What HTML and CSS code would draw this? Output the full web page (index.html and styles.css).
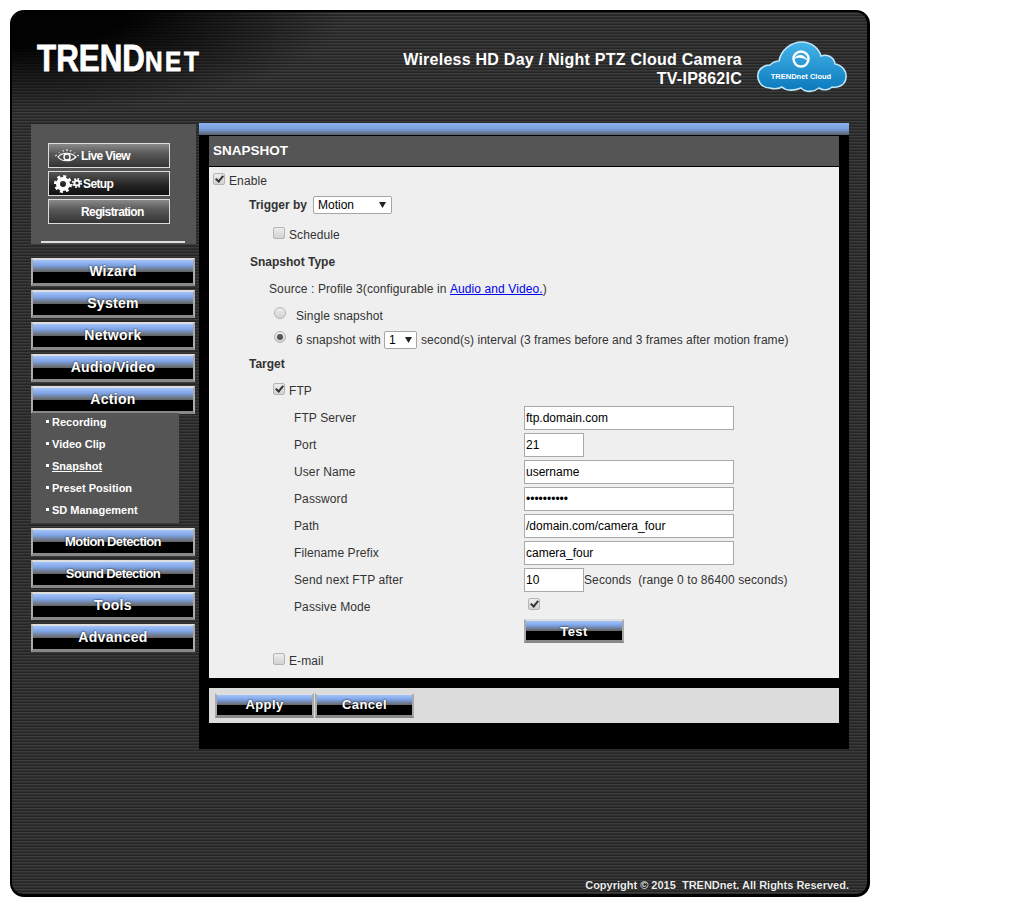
FILE: index.html
```html
<!DOCTYPE html>
<html lang="en">
<head>
  <meta charset="UTF-8">
  <title>TRENDnet TV-IP862IC</title>
  <link rel="stylesheet" href="styles.css">
</head>
<body>

  <div class="frame">

    <div class="header">
      <div class="logo">TREND<span class="logo-small">NET</span></div>
      <div class="model">
        <div>Wireless HD Day / Night PTZ Cloud Camera</div>
        <div>TV-IP862IC</div>
      </div>
      <svg class="cloud" viewBox="0 0 92 52" width="92" height="52">
        <defs>
          <linearGradient id="cloudFill" x1="0" y1="0" x2="0" y2="1">
            <stop offset="0" stop-color="#45b4e8"/>
            <stop offset="1" stop-color="#0a79bd"/>
          </linearGradient>
        </defs>
        <path d="M14 47 C4 47 1 38 2 33 C3 27 9 24 14 24 C17 21 21 20 23 20 C25 9 35 1 46 1 C56 1 63 8 65 15 C70 13 78 15 79 23 C86 24 91 30 90 37 C89 44 83 47 76 46 C73 49 67 50 63 47 C58 51 50 52 45 47 C38 50 30 50 26 46 C22 48 17 48 14 47 Z" fill="url(#cloudFill)" stroke="#bfe6f8" stroke-width="1.6"/>
        <circle cx="45" cy="18" r="7.5" fill="none" stroke="#fff" stroke-width="2.4"/>
        <path d="M38 18 C41 13 48 12 52 20 C47 16 42 16 38 18 Z" fill="#fff"/>
        <text class="cloud-text" x="45" y="38" text-anchor="middle">TRENDnet Cloud</text>
      </svg>
    </div>

    <div class="main">

      <div class="sidebar">
        <div class="quick">
          <a class="quick-btn" href="#">
            <svg class="eye" viewBox="0 0 26 15" width="26" height="15">
              <path d="M4 9 C8 4 17 4 22 9 C17 14 8 14 4 9 Z" fill="none" stroke="#fff" stroke-width="1.2"/>
              <circle cx="13" cy="9" r="3" fill="none" stroke="#fff" stroke-width="1.4"/>
              <path d="M1 8 L3 7 M5 4.500 L6 5.500 M9 2 L9.500 3.500 M13 1 L13 3 M17 2 L16.500 3.500 M21 4.500 L20 5.500 M25 8 L23 7" stroke="#fff" stroke-width="1"/>
            </svg>
            <span class="tight">Live View</span>
          </a>
          <a class="quick-btn quick-dark" href="#">
            <svg viewBox="0 0 28 18" width="28" height="18">
              <circle cx="9" cy="9" r="5" fill="none" stroke="#fff" stroke-width="4"/>
              <circle cx="9" cy="9" r="7.400" fill="none" stroke="#fff" stroke-width="3.200" stroke-dasharray="2.900 2.900"/>
              <circle cx="23" cy="8" r="2.600" fill="none" stroke="#fff" stroke-width="2"/>
              <circle cx="23" cy="8" r="4.200" fill="none" stroke="#fff" stroke-width="1.800" stroke-dasharray="1.650 1.650"/>
            </svg>
            <span class="tight">Setup</span>
          </a>
          <a class="quick-btn quick-text" href="#"><span class="tight">Registration</span></a>
          <div class="quick-line"></div>
        </div>

        <a class="nav-btn" href="#">Wizard</a>
        <a class="nav-btn" href="#">System</a>
        <a class="nav-btn" href="#">Network</a>
        <a class="nav-btn" href="#">Audio/Video</a>
        <a class="nav-btn" href="#">Action</a>
        <div class="submenu">
          <a href="#">Recording</a>
          <a href="#">Video Clip</a>
          <a href="#" class="current">Snapshot</a>
          <a href="#">Preset Position</a>
          <a href="#">SD Management</a>
        </div>
        <a class="nav-btn nav-tight" href="#">Motion Detection</a>
        <a class="nav-btn nav-tight" href="#">Sound Detection</a>
        <a class="nav-btn" href="#">Tools</a>
        <a class="nav-btn" href="#">Advanced</a>
      </div>

      <div class="content">
        <div class="blue-bar"></div>
        <div class="panel">
          <h1 class="title">SNAPSHOT</h1>

          <div class="form">
            <div class="row"><input type="checkbox" checked>Enable</div>

            <div class="row indent1">
              <strong class="trigger-label">Trigger by</strong>
              <select class="select-motion"><option>Motion</option></select>
            </div>
            <div class="row indent2 gap6"><input type="checkbox">Schedule</div>

            <div class="row indent1 gap3"><strong class="type-label">Snapshot Type</strong></div>
            <div class="row indent3 gap3">Source : Profile 3(configurable in&nbsp;<a href="#">Audio and Video.</a>)</div>
            <div class="row indent2 gap3"><input type="radio" class="radio">Single snapshot</div>
            <div class="row indent2">
              <input type="radio" class="radio" checked>
              <span>6 snapshot with</span>
              <select class="select-small"><option>1</option></select>
              <span class="interval">second(s) interval (3 frames before and 3 frames after motion frame)</span>
            </div>

            <div class="row indent1"><strong>Target</strong></div>
            <div class="row indent2 gap3"><input type="checkbox" checked>FTP</div>

            <div class="ftp">
              <label>FTP Server</label><div><input type="text" value="ftp.domain.com"></div>
              <label>Port</label><div><input type="text" class="short" value="21"></div>
              <label>User Name</label><div><input type="text" value="username"></div>
              <label>Password</label><div><input type="password" value="1234567890"></div>
              <label>Path</label><div><input type="text" value="/domain.com/camera_four"></div>
              <label>Filename Prefix</label><div><input type="text" value="camera_four"></div>
              <label>Send next FTP after</label><div class="cell-flex"><input type="text" class="short" value="10">Seconds&nbsp; (range 0 to 86400 seconds)</div>
              <label>Passive Mode</label><div class="cell-check"><input type="checkbox" checked></div>
              <span></span><div class="cell-btn"><a class="btn btn-test" href="#">Test</a></div>
            </div>

            <div class="row indent2 gap2"><input type="checkbox">E-mail</div>
          </div>

          <div class="actions">
            <a class="btn" href="#">Apply</a>
            <a class="btn" href="#">Cancel</a>
          </div>
        </div>
      </div>

    </div>

    <div class="copyright">Copyright © 2015&nbsp; TRENDnet. All Rights Reserved.</div>
  </div>

</body>
</html>
```

FILE: styles.css
```css
body {
  margin: 0;
  background: #fff;
  font-family: "Liberation Sans", Arial, sans-serif;
  font-size: 12px;
  color: #333;
}
a {
  text-decoration: none;
}

.frame {
  box-sizing: border-box;
  width: 860px;
  height: 887px;
  margin: 10px 0 0 10px;
  border: 2px solid #000;
  border-right-width: 3px;
  border-bottom-width: 3px;
  border-radius: 14px;
  padding-left: 18px;
  display: flex;
  flex-direction: column;
  background: repeating-linear-gradient(180deg, #252525 0, #252525 1px, #3c3c3c 1px, #3c3c3c 2px, #2e2e2e 2px, #2e2e2e 3px);
}

/* header */
.header {
  height: 110px;
  margin-left: -18px;
  padding: 0 19px 0 25px;
  display: flex;
  align-items: flex-start;
  border-radius: 12px 12px 0 0;
  background: radial-gradient(ellipse 330px 100px at 0 0, rgba(0,0,0,0.95) 35%, rgba(0,0,0,0) 100%);
}
.logo {
  margin-top: 27px;
  font-weight: bold;
  font-size: 36px;
  line-height: 40px;
  color: #fff;
  white-space: nowrap;
  transform: scaleX(0.87);
  transform-origin: left center;
  -webkit-text-stroke: 0.8px #fff;
  text-shadow: 1px 1px 1px #000;
}
.logo-small {
  font-size: 28px;
  letter-spacing: 3px;
}
.model {
  margin: 38px 14px 0 auto;
  font-weight: bold;
  font-size: 16px;
  line-height: 19px;
  letter-spacing: 0.25px;
  color: #fff;
  text-align: right;
}
.cloud {
  margin-top: 29px;
  flex: none;
}
.cloud-text {
  font-size: 7.5px;
  font-weight: bold;
  fill: #fff;
}

.main {
  display: flex;
  gap: 3px;
  flex: 1;
}

/* left column */
.sidebar {
  width: 166px;
  display: flex;
  flex-direction: column;
}
.quick {
  box-sizing: border-box;
  width: 165px;
  height: 120px;
  margin: 2px 0 14px 1px;
  padding: 19px 0 0 17px;
  background: #555;
  display: flex;
  flex-direction: column;
  align-items: flex-start;
  gap: 3px;
}
.quick-btn {
  box-sizing: border-box;
  width: 122px;
  height: 25px;
  padding-left: 5px;
  border: 1px solid #ddd;
  display: flex;
  align-items: center;
  color: #fff;
  font-weight: bold;
  font-size: 12px;
  background: linear-gradient(180deg, #8a8a8a 0, #5a5a5a 40%, #333 100%);
}
.quick-dark {
  background: linear-gradient(180deg, #555 0, #222 60%, #111 100%);
}
.quick-text {
  padding-left: 31px;
}
.tight {
  letter-spacing: -0.6px;
}
.quick-btn .tight {
  margin-left: 1px;
}
.quick-line {
  width: 144px;
  height: 2px;
  margin: 14px 0 0 -7px;
  background: #ddd;
}

.nav-btn, .btn {
  box-sizing: border-box;
  display: block;
  text-align: center;
  color: #fff;
  font-weight: bold;
  border: 2px solid #aaa;
  border-top-color: #ddd;
  border-bottom: 3px solid #888;
  background: linear-gradient(180deg, #a4c4fa 0, #7fa5e8 22%, #666 50%, #000 52%, #000 100%);
  text-shadow: 0 0 2px #000;
}
.nav-btn {
  width: 164px;
  height: 28px;
  margin: 0 0 4px 1px;
  font-size: 14px;
  line-height: 22px;
  letter-spacing: 0.3px;
}
.nav-btn.nav-tight {
  font-size: 13px;
  line-height: 23px;
  letter-spacing: -0.6px;
}
.submenu {
  box-sizing: border-box;
  width: 148px;
  height: 110px;
  margin: -5px 0 5px 1px;
  background: #555;
  display: flex;
  flex-direction: column;
}
.submenu a {
  height: 22px;
  line-height: 18px;
  padding-left: 21px;
  color: #fff;
  font-weight: bold;
  font-size: 11px;
  position: relative;
}
.submenu a::before {
  content: "";
  position: absolute;
  left: 15px;
  top: 7px;
  width: 3px;
  height: 3px;
  background: #fff;
}
.submenu .current {
  text-decoration: underline;
}

/* right column */
.content {
  width: 650px;
  margin-top: 1px;
}
.blue-bar {
  height: 12px;
  background: linear-gradient(180deg, #8cb2f0 0, #7a9fdc 50%, #5a5f6a 100%);
}
.panel {
  height: 613px;
  padding: 1px 10px 0;
  background: #000;
}
.title {
  margin: 0;
  height: 30px;
  padding-left: 4px;
  line-height: 30px;
  background: #555;
  color: #fff;
  font-size: 13.5px;
}
.form {
  box-sizing: border-box;
  height: 511px;
  margin-top: 1px;
  padding: 2px 0 0 4px;
  background: #efefef;
}
.row {
  height: 24px;
  display: flex;
  align-items: center;
  letter-spacing: 0.1px;
}
.row strong {
  letter-spacing: 0;
}
.interval {
  letter-spacing: 0.05px;
}
.indent1 {
  padding-left: 36px;
}
.indent2 {
  padding-left: 60px;
}
.indent3 {
  padding-left: 56px;
}
.gap2 {
  margin-top: 2px;
}
.gap3 {
  margin-top: 3px;
}
.gap6 {
  margin-top: 6px;
}
.trigger-label {
  margin-right: 6px;
}
.type-label {
  margin-left: 1px;
}

input[type="checkbox"], input[type="radio"] {
  appearance: none;
  box-sizing: border-box;
  width: 12px;
  height: 12px;
  margin: -5px 4px 0 0;
  border: 1px solid #b5b5b5;
  border-radius: 2px;
  background: linear-gradient(180deg, #ededed, #d2d2d2);
  position: relative;
  flex: none;
}
input[type="checkbox"]:checked::before {
  content: "";
  position: absolute;
  left: 3px;
  top: 0;
  width: 3px;
  height: 6px;
  border: solid #333;
  border-width: 0 2px 2px 0;
  transform: rotate(40deg);
}
input.radio {
  border-radius: 50%;
  margin: -6px 10px 0 1px;
}
input.radio:checked::before {
  content: "";
  position: absolute;
  left: 2px;
  top: 2px;
  width: 6px;
  height: 6px;
  border-radius: 50%;
  background: #555;
}

select {
  appearance: none;
  box-sizing: border-box;
  height: 18px;
  border: 1px solid #a6a6a6;
  border-radius: 2px;
  padding: 0 0 0 4px;
  font-family: inherit;
  font-size: 12px;
  color: #000;
  background: #fff url("data:image/svg+xml,%3Csvg xmlns='http://www.w3.org/2000/svg' width='7' height='6'%3E%3Cpath d='M0 0H7L3.500 6Z' fill='%23222'/%3E%3C/svg%3E") no-repeat;
}
.select-motion {
  width: 79px;
  background-position: 65px 5px;
}
.select-small {
  width: 33px;
  margin: 0 4px 0 3px;
  background-position: 20px 5px;
}
.row a {
  color: #00e;
  text-decoration: underline;
}

.ftp {
  display: grid;
  grid-template-columns: 230px 1fr;
  grid-auto-rows: 27px;
  padding: 1px 0 0 81px;
  letter-spacing: 0.1px;
}
.ftp label, .ftp > div {
  display: flex;
  align-items: center;
}
.ftp input[type="text"], .ftp input[type="password"] {
  box-sizing: border-box;
  width: 210px;
  height: 24px;
  padding: 0 1px;
  border: 1px solid #a9a9a9;
  background: #fff;
  font-family: inherit;
  font-size: 12px;
  color: #000;
}
.ftp input.short {
  width: 60px;
}
.cell-check {
  padding-left: 4px;
}
.ftp > .cell-btn {
  align-items: flex-start;
}
.btn {
  width: 99px;
  height: 25px;
  font-size: 13px;
  line-height: 19px;
  letter-spacing: 0.4px;
}
.btn-test {
  width: 100px;
  height: 24px;
  margin-top: -1px;
  line-height: 21px;
}

.actions {
  height: 35px;
  margin-top: 10px;
  padding: 5px 0 0 6px;
  box-sizing: border-box;
  background: #dcdcdc;
  display: flex;
  gap: 1px;
}

.copyright {
  margin: 0 18px 3px auto;
  font-weight: bold;
  font-size: 11px;
  color: #eee;
  text-shadow: 0 0 1px #000;
}
```
